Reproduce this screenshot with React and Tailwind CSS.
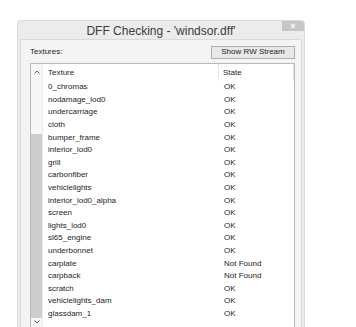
import React from "react";

const rows = [
  ["0_chromas", "OK"],
  ["nodamage_lod0", "OK"],
  ["undercarriage", "OK"],
  ["cloth", "OK"],
  ["bumper_frame", "OK"],
  ["interior_lod0", "OK"],
  ["grill", "OK"],
  ["carbonfiber", "OK"],
  ["vehiclelights", "OK"],
  ["interior_lod0_alpha", "OK"],
  ["screen", "OK"],
  ["lights_lod0", "OK"],
  ["sl65_engine", "OK"],
  ["underbonnet", "OK"],
  ["carplate", "Not Found"],
  ["carpback", "Not Found"],
  ["scratch", "OK"],
  ["vehiclelights_dam", "OK"],
  ["glassdam_1", "OK"],
];

export default function App() {
  return (
    <div
      className="w-[356px] h-[327px] bg-white overflow-hidden"
      style={{ fontFamily: '"Liberation Sans", Arial, sans-serif' }}
    >
      <div className="ml-[17px] mt-[20px] w-[288px] h-[320px] bg-[#ececec] border border-[#dcdcdc] rounded-t-[3px] flex flex-col">
        {/* Title bar */}
        <div className="relative h-[18px] flex items-center justify-center shrink-0">
          <span className="text-[12px] leading-none text-[#3a3a3a] pt-[2px]">
            DFF Checking - 'windsor.dff'
          </span>
          <div className="absolute right-0 top-0 w-[22px] h-[10px] bg-[#c6c6c6] rounded-tr-[3px] flex items-center justify-center">
            <span className="text-[9px] leading-none text-white font-bold">×</span>
          </div>
        </div>
        {/* Client area */}
        <div className="flex-1 mx-[2px] bg-[#f4f4f4] border border-[#dadada] pl-[9px] pr-[6px] flex flex-col">
          <div className="flex items-center justify-between h-[22px] mt-[1px]">
            <span className="text-[8px] text-[#1e1e1e]">Textures:</span>
            <div className="w-[84px] h-[13px] bg-[#e8e8e8] border border-[#adadad] flex items-center justify-center">
              <span className="text-[8px] leading-none text-[#1e1e1e]">Show RW Stream</span>
            </div>
          </div>
          <div className="flex-1 bg-white border border-[#b9b9b9] flex min-h-0">
            {/* Scrollbar on left */}
            <div className="w-[12px] shrink-0 bg-[#f7f7f7] border-r border-[#ededed] flex flex-col items-center">
              <div className="h-[15px] flex items-center justify-center">
                <svg width="6" height="4" viewBox="0 0 6 4">
                  <path d="M0.5 3.5 L3 1 L5.5 3.5" fill="none" stroke="#606060" strokeWidth="1" />
                </svg>
              </div>
              <div className="h-[55px]" />
              <div className="w-[11px] h-[184px] bg-[#cdcdcd]" />
              <div className="h-[8px] flex items-center justify-center">
                <svg width="6" height="4" viewBox="0 0 6 4">
                  <path d="M0.5 0.5 L3 3 L5.5 0.5" fill="none" stroke="#606060" strokeWidth="1" />
                </svg>
              </div>
            </div>
            <div className="flex-1 flex flex-col min-w-0">
              <div className="h-[17px] flex text-[8px] text-[#1e1e1e] shrink-0">
                <div className="w-[176px] pl-[5px] flex items-center border-r border-[#e5e5e5]">Texture</div>
                <div className="w-[75px] pl-[4px] flex items-center border-r border-[#e5e5e5]">State</div>
              </div>
              {rows.map(([name, state]) => (
                <div key={name} className="h-[12.6px] flex items-center text-[8px] text-[#1e1e1e] shrink-0">
                  <div className="w-[176px] pl-[5px] leading-none">{name}</div>
                  <div className="w-[75px] pl-[5px] leading-none">{state}</div>
                </div>
              ))}
            </div>
          </div>
        </div>
      </div>
    </div>
  );
}
